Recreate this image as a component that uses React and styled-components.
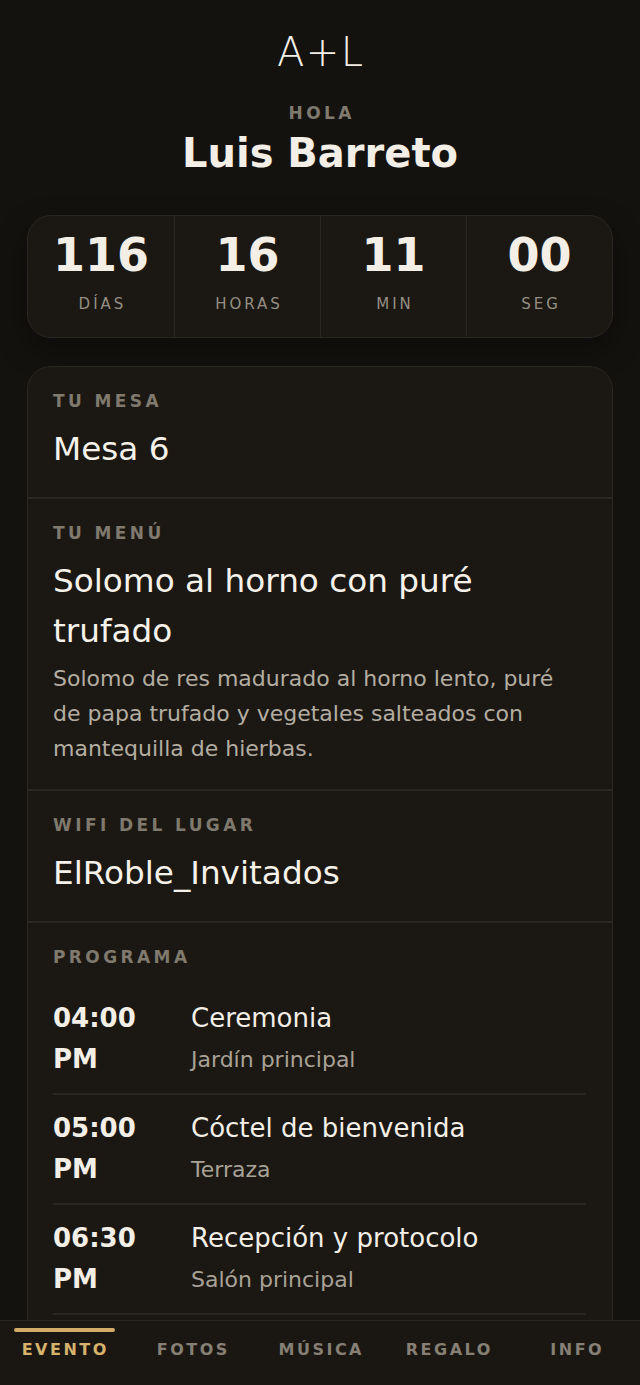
import styled, { createGlobalStyle } from 'styled-components';

const GlobalStyle = createGlobalStyle`
  * { box-sizing: border-box; }
  html, body {
    margin: 0;
    padding: 0;
    background: #14120f;
  }
  body {
    font-family: 'DejaVu Sans', 'Noto Sans', sans-serif;
    color: #f3efe6;
    -webkit-font-smoothing: antialiased;
  }
`;

const Page = styled.div`
  padding: 28px 27px 96px;
  display: flex;
  flex-direction: column;
`;

const Header = styled.header`
  display: flex;
  flex-direction: column;
  align-items: center;
  text-align: center;
`;

const Monogram = styled.div`
  font-size: 40px;
  font-weight: 300;
  line-height: 48px;
  letter-spacing: 1.5px;
  padding-left: 1.5px;
`;

const Greeting = styled.div`
  margin-top: 27px;
  font-size: 17px;
  font-weight: 700;
  letter-spacing: 3.4px;
  color: #7f796e;
  text-transform: uppercase;
  padding-left: 3.4px;
`;

const GuestName = styled.h1`
  margin: 6px 0 0;
  font-size: 40px;
  font-weight: 700;
  line-height: 48px;
`;

const Countdown = styled.div`
  margin-top: 38px;
  display: grid;
  grid-template-columns: repeat(4, 1fr);
  background: #1b1814;
  border: 1px solid #2a2621;
  border-radius: 24px;
  overflow: hidden;
  box-shadow: 0 12px 30px rgba(0, 0, 0, 0.35);
`;

const CountCell = styled.div`
  display: flex;
  flex-direction: column;
  align-items: center;
  padding: 16px 0 24px;
  border-left: ${({ $first }) => ($first ? 'none' : '1px solid #2a2621')};
`;

const CountValue = styled.div`
  font-size: 46px;
  font-weight: 700;
  line-height: 46px;
`;

const CountLabel = styled.div`
  margin-top: 17px;
  font-size: 15px;
  letter-spacing: 3px;
  padding-left: 3px;
  color: #958f83;
`;

const InfoCard = styled.section`
  margin-top: 28px;
  background: #1b1814;
  border: 1px solid #2a2621;
  border-radius: 24px;
  overflow: hidden;
`;

const Block = styled.div`
  padding: 24px 26px 23px 25px;
  border-top: ${({ $first }) => ($first ? 'none' : '2px solid #2a2621')};
`;

const Label = styled.div`
  font-size: 17px;
  font-weight: 700;
  letter-spacing: 3.4px;
  color: #7f796e;
  text-transform: uppercase;
`;

const Value = styled.div`
  margin-top: 13px;
  font-size: 32.7px;
  line-height: 50px;
  color: #f6f2ea;
`;

const Description = styled.p`
  margin: 5px 0 0;
  font-size: 22px;
  line-height: 35px;
  color: #b4ada1;
`;

const Schedule = styled.div`
  margin-top: 18px;
  display: flex;
  flex-direction: column;
`;

const ScheduleRow = styled.div`
  display: grid;
  grid-template-columns: 112px 1fr;
  column-gap: 26px;
  padding: 13px 0;
  border-bottom: 2px solid #2a2621;
`;

const Time = styled.div`
  font-size: 26px;
  font-weight: 700;
  line-height: 41px;
`;

const EventInfo = styled.div`
  display: flex;
  flex-direction: column;
`;

const EventTitle = styled.div`
  font-size: 26px;
  line-height: 41px;
`;

const EventPlace = styled.div`
  font-size: 22px;
  line-height: 41px;
  color: #a9a296;
`;

const BottomNav = styled.nav`
  position: fixed;
  left: 0;
  right: 0;
  bottom: 0;
  height: 65px;
  display: grid;
  grid-template-columns: repeat(5, 1fr);
  background: #1a1713;
  border-top: 1px solid #2a2621;
`;

const NavItem = styled.div`
  position: relative;
  display: flex;
  justify-content: center;
  padding-top: 19px;
  font-size: 16px;
  font-weight: 700;
  letter-spacing: 2.5px;
  padding-left: 2.5px;
  color: ${({ $active }) => ($active ? '#d6b26b' : '#857f74')};

  &::before {
    content: '';
    display: ${({ $active }) => ($active ? 'block' : 'none')};
    position: absolute;
    top: 7px;
    left: 14px;
    right: 13px;
    height: 4px;
    border-radius: 2px;
    background: #d3ad67;
  }
`;

const countdown = [
  { value: '116', label: 'DÍAS' },
  { value: '16', label: 'HORAS' },
  { value: '11', label: 'MIN' },
  { value: '00', label: 'SEG' },
];

const schedule = [
  { time: '04:00 PM', title: 'Ceremonia', place: 'Jardín principal' },
  { time: '05:00 PM', title: 'Cóctel de bienvenida', place: 'Terraza' },
  { time: '06:30 PM', title: 'Recepción y protocolo', place: 'Salón principal' },
  { time: '08:00 PM', title: 'Cena', place: 'Salón principal' },
  { time: '09:30 PM', title: 'Fiesta', place: 'Pista de baile' },
];

const tabs = ['EVENTO', 'FOTOS', 'MÚSICA', 'REGALO', 'INFO'];

const App = () => {
  return (
    <>
      <GlobalStyle />
      <Page>
        <Header>
          <Monogram>A+L</Monogram>
          <Greeting>Hola</Greeting>
          <GuestName>Luis Barreto</GuestName>
        </Header>

        <Countdown>
          {countdown.map((c, i) => (
            <CountCell key={c.label} $first={i === 0}>
              <CountValue>{c.value}</CountValue>
              <CountLabel>{c.label}</CountLabel>
            </CountCell>
          ))}
        </Countdown>

        <InfoCard>
          <Block $first>
            <Label>Tu mesa</Label>
            <Value>Mesa 6</Value>
          </Block>
          <Block>
            <Label>Tu menú</Label>
            <Value>Solomo al horno con puré trufado</Value>
            <Description>
              Solomo de res madurado al horno lento, puré de papa trufado y
              vegetales salteados con mantequilla de hierbas.
            </Description>
          </Block>
          <Block>
            <Label>Wifi del lugar</Label>
            <Value>ElRoble_Invitados</Value>
          </Block>
          <Block>
            <Label>Programa</Label>
            <Schedule>
              {schedule.map((s) => (
                <ScheduleRow key={s.time}>
                  <Time>{s.time}</Time>
                  <EventInfo>
                    <EventTitle>{s.title}</EventTitle>
                    <EventPlace>{s.place}</EventPlace>
                  </EventInfo>
                </ScheduleRow>
              ))}
            </Schedule>
          </Block>
        </InfoCard>
      </Page>

      <BottomNav>
        {tabs.map((t, i) => (
          <NavItem key={t} $active={i === 0}>
            {t}
          </NavItem>
        ))}
      </BottomNav>
    </>
  );
};

export default App;
